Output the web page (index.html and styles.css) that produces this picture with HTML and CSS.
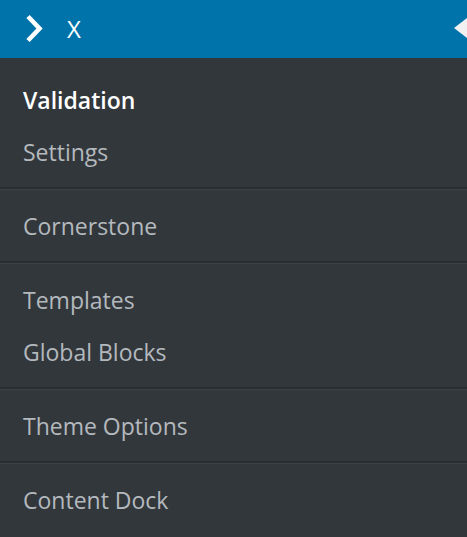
FILE: index.html
```html
<!DOCTYPE html>
<html>
<head>
<meta charset="utf-8">
<link rel="stylesheet" href="styles.css">
</head>
<body>
<div class="menu">
  <div class="header">
    <svg class="chev" width="20" height="30" viewBox="0 0 20 30">
      <polyline points="4,2.5 15.5,14.5 4,26.5" fill="none" stroke="#fff" stroke-width="4.6" stroke-linecap="butt" stroke-linejoin="miter"/>
    </svg>
    <span class="title">X</span>
    <span class="pointer"></span>
  </div>
  <div class="group first">
    <div class="item current">Validation</div>
    <div class="item">Settings</div>
  </div>
  <div class="group">
    <div class="item">Cornerstone</div>
  </div>
  <div class="group">
    <div class="item">Templates</div>
    <div class="item">Global Blocks</div>
  </div>
  <div class="group">
    <div class="item">Theme Options</div>
  </div>
  <div class="group last">
    <div class="item">Content Dock</div>
  </div>
</div>
</body>
</html>
```
FILE: styles.css
```css
html, body {
  margin: 0;
  padding: 0;
  background: #32373c;
}
body {
  font-family: "Open Sans", "Noto Sans", sans-serif;
  width: 467px;
  height: 537px;
  overflow: hidden;
}
.header {
  position: relative;
  height: 58px;
  background: #0073aa;
  display: flex;
  align-items: center;
  padding-left: 24px;
  box-sizing: border-box;
}
.chev {
  display: block;
}
.title {
  color: #fff;
  font-size: 24px;
  margin-left: 23px;
  line-height: 1;
}
.pointer {
  position: absolute;
  right: 0;
  top: 18px;
  width: 0;
  height: 0;
  border-top: 10px solid transparent;
  border-bottom: 10px solid transparent;
  border-right: 13px solid #f1f1f1;
}
.group {
  padding: 10px 0 9px;
  border-bottom: 2px solid #292d31;
  border-top: 1px solid #3c4247;
}
.group.first {
  padding-top: 16px;
  border-top: none;
}
.group.last {
  border-bottom: none;
}
.item {
  height: 52px;
  line-height: 52px;
  padding-left: 23px;
  font-size: 23px;
  color: #b4b9be;
  white-space: nowrap;
}
.item.current {
  color: #fff;
  font-weight: 600;
}
```
